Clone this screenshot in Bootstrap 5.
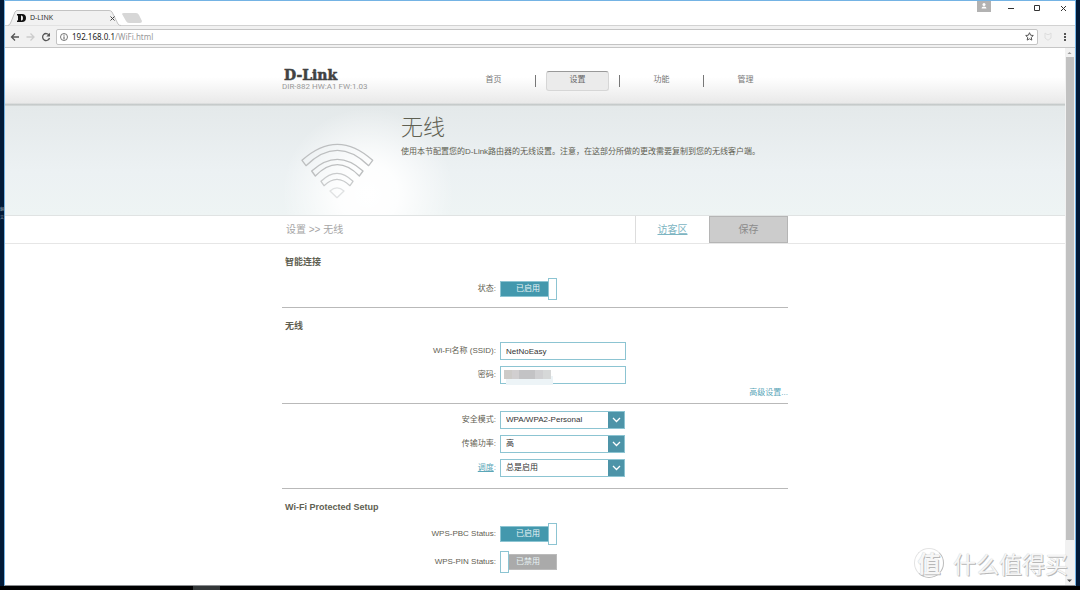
<!DOCTYPE html>
<html lang="zh-CN">
<head>
<meta charset="utf-8">
<meta name="viewport" content="width=device-width, initial-scale=1">
<title>D-LINK</title>
<link href="https://cdn.jsdelivr.net/npm/bootstrap@5.3.0/dist/css/bootstrap.min.css" rel="stylesheet">
<style>
  :root { --teal: #4398ad; --line: #8cc4d2; --ink: #5f6052; }
  body { font-family: "Liberation Sans", "Noto Sans CJK SC", sans-serif; font-size: 8px; line-height: 12px; color: var(--ink); background: #000; }
  button, input, select { font-family: inherit; }
  .desktop { height: 100vh; background: #021a38; }
  .window { margin: 0 4px; border: 1px solid #74b3e4; border-bottom-color: #8a8d90; min-height: 0; }
  .taskbar { height: 4px; background: #000; padding-left: 193px; }
  .task-active { width: 27px; background: #333738; }
  .desk-label { left: 0; top: 206px; font-size: 4px; line-height: 8px; color: #8d98a5; }

  /* browser frame */
  .tabstrip { height: 25px; border-bottom: 1px solid #d2d2d2; }
  .tab-face { width: 114px; height: 16px; margin: 0 0 -1px 3px; padding: 0 7px 0 9px; font: 7px/16px "Noto Sans", sans-serif; color: #333; }
  .tab-face svg.shape { left: 0; top: 0; }
  .win-controls { gap: 17px; padding-right: 8px; }
  .plain { border: 0; background: none; padding: 0; display: flex; }
  .toolbar { height: 22px; background: #f1f1f1; border-bottom: 1px solid #c6c6c6; padding: 0 5px; gap: 5px; }
  .omnibox { height: 16px; border: 1px solid #c4c4c4; border-radius: 2px; padding: 0 3px; gap: 4px; font: 8px/14px "Noto Sans", sans-serif; color: #222; }
  .omnibox .path { color: #999; }
  .toolbar .ext { margin: 0 3px 0 1px; }

  /* router page */
  .column { width: 506px; max-width: 100%; margin: 0 auto; }
  .topbar { height: 58px; background: linear-gradient(#fff 50%, #e9e9e9 95%, #c3c8c8 97%, #d8dcdc); }
  .brand { padding-top: 20px; line-height: 10px; color: #999; font-family: Roboto, sans-serif; }
  .menu { padding: 21px 11px 0 0; }
  .menu a { width: 63px; height: 20px; line-height: 18px; text-align: center; color: #777; text-decoration: none; border-radius: 3px; }
  .menu a.active { background: #ebebeb; border: 1px solid #d6d6d6; border-top: 1px solid #999; line-height: 16px; color: #666; }
  .menu .bar { width: 1px; height: 12px; background: #777; margin: 0 10px; }
  .hero { height: 110px; background: linear-gradient(#e4e9ea, #ecf1f3 60%, #eef4f4); border-bottom: 1px solid #e0e3e3; }
  .hero .column { background: radial-gradient(circle at 86px 88px, #fff 0, #ffffffe6 30px, #ffffff66 60px, #fff0 86px); height: 100%; }
  .hero-icon { width: 119px; padding: 36px 0 0 18px; }
  .hero h1 { font-size: 22px; font-weight: 300; line-height: 28px; margin: 8px 0 3px; }
  .hero p { line-height: 14px; margin: 0; }
  .crumbs { border-bottom: 1px solid #e6e6e6; font-size: 10px; line-height: 27px; color: #a5a5a5; }
  .crumbs .path { padding-left: 4px; }
  .crumbs a { width: 74px; text-align: center; color: #7db5c2; border-left: 1px solid #ddd; }
  .save { width: 79px; border: 1px solid #b5b5b5; background: #ccc; color: #8b8b8b; font-size: 10px; line-height: 25px; padding: 0; }

  .group { padding-top: 10px; border-bottom: 1px solid #b9b9b9; }
  .group h2 { font-size: 9px; font-weight: 700; line-height: 17px; margin: 0 0 4px; padding-left: 3px; }
  .field { display: grid; grid-template-columns: 214px auto; column-gap: 4px; align-items: center; height: 24px; justify-content: start; }
  .field.tall { height: 28px; }
  .field .caption { text-align: right; }
  .accent, .accent:hover { color: #5aa6b8; }
  .box { width: 126px; height: 18px; border: 1px solid var(--line); border-radius: 0; padding: 0 5px; font-size: 8px; line-height: 16px; color: #333; background-color: #fff; }
  select.box { width: 125px; appearance: none; background: #fff url("data:image/svg+xml,%3Csvg xmlns='http://www.w3.org/2000/svg' width='17' height='18'%3E%3Cpath fill='%234d94a8' d='M0 0h17v18H0z'/%3E%3Cpath d='M5 7l3.500 3.500L12 7' fill='none' stroke='white' stroke-width='1.300'/%3E%3C/svg%3E") right center no-repeat; background-origin: border-box; }
  .mosaic { left: 4px; top: 4px; width: 47px; height: 9px; background: linear-gradient(90deg, #cdcbc8 0 16%, #d1cfd0 16% 32%, #c3c3c5 32% 65%, #d0d0d2 65% 82%, #d6d8d8 82%); box-shadow: 2px 6px 0 #edf4f7; }
  .switch { width: 57px; height: 22px; cursor: pointer; }
  .switch input { appearance: none; margin: 0; width: 57px; height: 16px; background: #aaa; border: 1px solid #bbb; display: block; }
  .switch input:checked { background: var(--teal); border-color: var(--line); }
  .switch .state { left: 16px; top: 5px; color: #e8f3f5; line-height: 12px; pointer-events: none; }
  .switch .knob { left: 0; top: 0; width: 9px; height: 22px; background: #fff; border: 1px solid var(--line); pointer-events: none; }
  .switch input:checked ~ .knob { left: auto; right: 0; }

  .scroll { width: 10px; background: #f1f1f1; flex: none; }
  .scroll .thumb { background: #c1c1c1; margin: 0 1px; height: 484px; max-height: 90%; }
  .stamp { right: 7px; bottom: 6px; gap: 9px; color: #f6f6f6; text-shadow: 1px 1px 0 #b8b8b8, 0 0 1px #c0c0c0; font: 23px/32px "Noto Sans CJK SC", sans-serif; pointer-events: none; }
  .stamp .seal { width: 30px; height: 30px; line-height: 26px; text-align: center; font-weight: 700; border: 1px solid #e3e3e3; border-right-color: #bbb; border-bottom-color: #bbb; border-radius: 50%; }
</style>
</head>
<body>
<div class="desktop d-flex flex-column position-relative overflow-hidden">
  <div class="desk-label position-absolute">翻<br>文</div>
  <div class="window bg-white flex-grow-1 d-flex flex-column position-relative overflow-hidden">
    <header class="tabstrip d-flex">
      <div class="tab-face position-relative d-flex align-items-center align-self-end">
        <svg class="shape position-absolute" width="116" height="16"><path d="M0 15.500Q2 15 3 12L7 2Q8 .5 9 .5H101Q103 .5 104 2L110 14Q111 15.500 113 15.500" fill="#f1f1f1" stroke="#c3c3c3"/></svg>
        <svg class="position-relative me-1" width="9" height="8" viewBox="0 0 9 8"><path fill="#111" fill-rule="evenodd" d="M0 0H5Q9 0 9 4T5 8H0V6.500H1V1.500H0zM4 1.500V6.500H4.500Q6 6.500 6 4T4.500 1.500z"/></svg>
        <span class="position-relative flex-grow-1">D-LINK</span>
        <button class="plain position-relative" aria-label="关闭标签页"><svg width="5" height="5"><path d="M.5.5l4 4m0-4l-4 4" stroke="#444"/></svg></button>
      </div>
      <button class="plain align-self-end mb-0" aria-label="新标签页"><svg width="21" height="12"><path d="M2 0H14Q16 0 17 2L20 8Q20 10 18 10H7Q5 10 4 8L0 1Q0 0 2 0" fill="#d7d7d7"/></svg></button>
      <div class="win-controls d-flex ms-auto align-items-start">
        <button class="plain" aria-label="用户"><svg width="14" height="11"><path fill="#b2b2b2" d="M0 0h14v11H0z"/><circle cx="7" cy="3.500" r="1.500" fill="#fff"/><path fill="#fff" d="M4.500 7.500Q4.500 5.500 7 5.500T9.500 7.500z"/></svg></button>
        <button class="plain pt-1" aria-label="最小化"><svg width="7" height="7"><path d="M0 3.500h6" stroke="#333"/></svg></button>
        <button class="plain pt-1" aria-label="最大化"><svg width="9" height="7"><path d="M2.500.5h5v5h-5z" fill="none" stroke="#333"/></svg></button>
        <button class="plain pt-1" aria-label="关闭"><svg width="9" height="7"><path d="M3 1l5 5m0-5l-5 5" stroke="#333"/></svg></button>
      </div>
    </header>
    <nav class="toolbar d-flex align-items-center">
      <button class="plain" aria-label="后退"><svg width="10" height="10"><path d="M5 1.500L1.500 5 5 8.500M1.500 5H9" fill="none" stroke="#555" stroke-width="1.300"/></svg></button>
      <button class="plain" aria-label="前进"><svg width="11" height="10"><path d="M5.500 1.500L9 5 5.500 8.500M9 5H1.500" fill="none" stroke="#ccc" stroke-width="1.300"/></svg></button>
      <button class="plain" aria-label="刷新"><svg width="10" height="10"><path d="M8 3A3.500 3.500 0 1 0 8.500 6" fill="none" stroke="#555" stroke-width="1.300"/><path d="M9 .8V4.500H5.300z" fill="#555"/></svg></button>
      <div class="omnibox bg-white flex-grow-1 d-flex align-items-center">
        <svg width="8" height="8"><circle cx="4" cy="4" r="3.500" fill="none" stroke="#555" stroke-width=".8"/><path d="M4 1.700v1M4 3.400v3" stroke="#555"/></svg>
        <span class="flex-grow-1">192.168.0.1<span class="path">/WiFi.html</span></span>
        <svg width="9" height="9" viewBox="0 0 9 9"><path d="M4.500.7l1.100 2.500 2.700.3-2 1.900.5 2.700-2.300-1.300-2.300 1.300.5-2.700-2-1.900 2.700-.3z" fill="none" stroke="#555"/></svg>
      </div>
      <svg class="ext" width="8" height="9"><path d="M1 1l2 1.500h2L7 1v5L4 8.300 1 6z" fill="none" stroke="#ddd"/></svg>
      <button class="plain px-1" aria-label="菜单"><svg width="2" height="8"><path d="M0 0h2v2H0zM0 3h2v2H0zM0 6h2v2H0z" fill="#555"/></svg></button>
    </nav>

    <div class="d-flex flex-grow-1 overflow-hidden">
      <main class="flex-grow-1 overflow-hidden">
        <div class="topbar">
          <div class="column d-flex">
            <div class="brand flex-grow-1">
              <svg class="d-block" width="64" height="14" role="img" aria-label="D-Link"><text x="2" y="12" font-family="DejaVu Serif" font-weight="700" font-size="14" fill="#414242" stroke="#414242" stroke-width=".5">D-Link</text></svg>
              DIR-882 HW:A1 FW:1.03
            </div>
            <nav class="menu d-flex align-items-center">
              <a href="#">首页</a><span class="bar"></span>
              <a class="active" href="#">设置</a><span class="bar"></span>
              <a href="#">功能</a><span class="bar"></span>
              <a href="#">管理</a>
            </nav>
          </div>
        </div>
        <div class="hero">
          <div class="column d-flex">
            <div class="hero-icon">
              <svg width="75" height="58" viewBox="60 110 225 174" fill="none" stroke="#bdbfc0" stroke-width="4" stroke-linejoin="round">
                <path d="M66 165Q172 69 278 165L266 181Q172 89 78 181Z"/>
                <path d="M95 197Q172 127 249 197L238 212Q172 144 106 212Z"/>
                <path stroke="#c9cbcc" d="M123 228Q171 180 219 228L210 241Q171 203 132 241Z"/>
                <path stroke="#e0e2e3" d="M150 257Q171 238 192 257L171 277Z"/>
              </svg>
            </div>
            <div>
              <h1>无线</h1>
              <p>使用本节配置您的D-Link路由器的无线设置。注意，在这部分所做的更改需要复制到您的无线客户端。</p>
            </div>
          </div>
        </div>
        <div class="crumbs">
          <div class="column d-flex">
            <span class="path flex-grow-1">设置 &gt;&gt; 无线</span>
            <a href="#">访客区</a>
            <button class="save" type="button">保存</button>
          </div>
        </div>
        <form class="column">
          <section class="group pb-1">
            <h2>智能连接</h2>
            <div class="field tall">
              <label class="caption" for="smart">状态:</label>
              <label class="switch position-relative d-flex align-items-center"><input type="checkbox" id="smart" checked><span class="state position-absolute">已启用</span><span class="knob position-absolute"></span></label>
            </div>
          </section>
          <section class="group">
            <h2>无线</h2>
            <div class="field">
              <label class="caption" for="ssid">Wi-Fi名称 (SSID):</label>
              <input class="box" id="ssid" type="text" value="NetNoEasy">
            </div>
            <div class="field">
              <label class="caption" for="key">密码:</label>
              <div class="position-relative d-flex"><input class="box" id="key" type="text"><span class="mosaic position-absolute"></span></div>
            </div>
            <div class="text-end pb-1"><a class="accent text-decoration-none" href="#">高级设置...</a></div>
          </section>
          <section class="group pt-1 pb-2">
            <div class="field">
              <label class="caption" for="security">安全模式:</label>
              <select class="box" id="security"><option>WPA/WPA2-Personal</option></select>
            </div>
            <div class="field">
              <label class="caption" for="power">传输功率:</label>
              <select class="box" id="power"><option>高</option></select>
            </div>
            <div class="field">
              <label class="caption accent" for="schedule"><a class="accent" href="#">调度</a>:</label>
              <select class="box" id="schedule"><option>总是启用</option></select>
            </div>
          </section>
          <section class="group border-0">
            <h2>Wi-Fi Protected Setup</h2>
            <div class="field tall">
              <label class="caption" for="pbc">WPS-PBC Status:</label>
              <label class="switch position-relative d-flex align-items-center"><input type="checkbox" id="pbc" checked><span class="state position-absolute">已启用</span><span class="knob position-absolute"></span></label>
            </div>
            <div class="field tall">
              <label class="caption" for="pin">WPS-PIN Status:</label>
              <label class="switch position-relative d-flex align-items-center"><input type="checkbox" id="pin"><span class="state position-absolute">已禁用</span><span class="knob position-absolute"></span></label>
            </div>
          </section>
        </form>
      </main>
      <div class="scroll d-flex flex-column">
        <svg width="9" height="9"><path d="M2.500 6L4.500 4 6.500 6z" fill="#999"/></svg>
        <div class="thumb"></div>
        <svg class="mt-auto" width="9" height="9"><path d="M2 3.500h5L4.500 6z" fill="#555"/></svg>
      </div>
    </div>
    <div class="stamp position-absolute d-flex align-items-center"><span class="seal">值</span><span>什么值得买</span></div>
  </div>
  <footer class="taskbar d-flex"><div class="task-active"></div></footer>
</div>
<script src="https://cdn.jsdelivr.net/npm/bootstrap@5.3.0/dist/js/bootstrap.bundle.min.js"></script>
</body>
</html>
